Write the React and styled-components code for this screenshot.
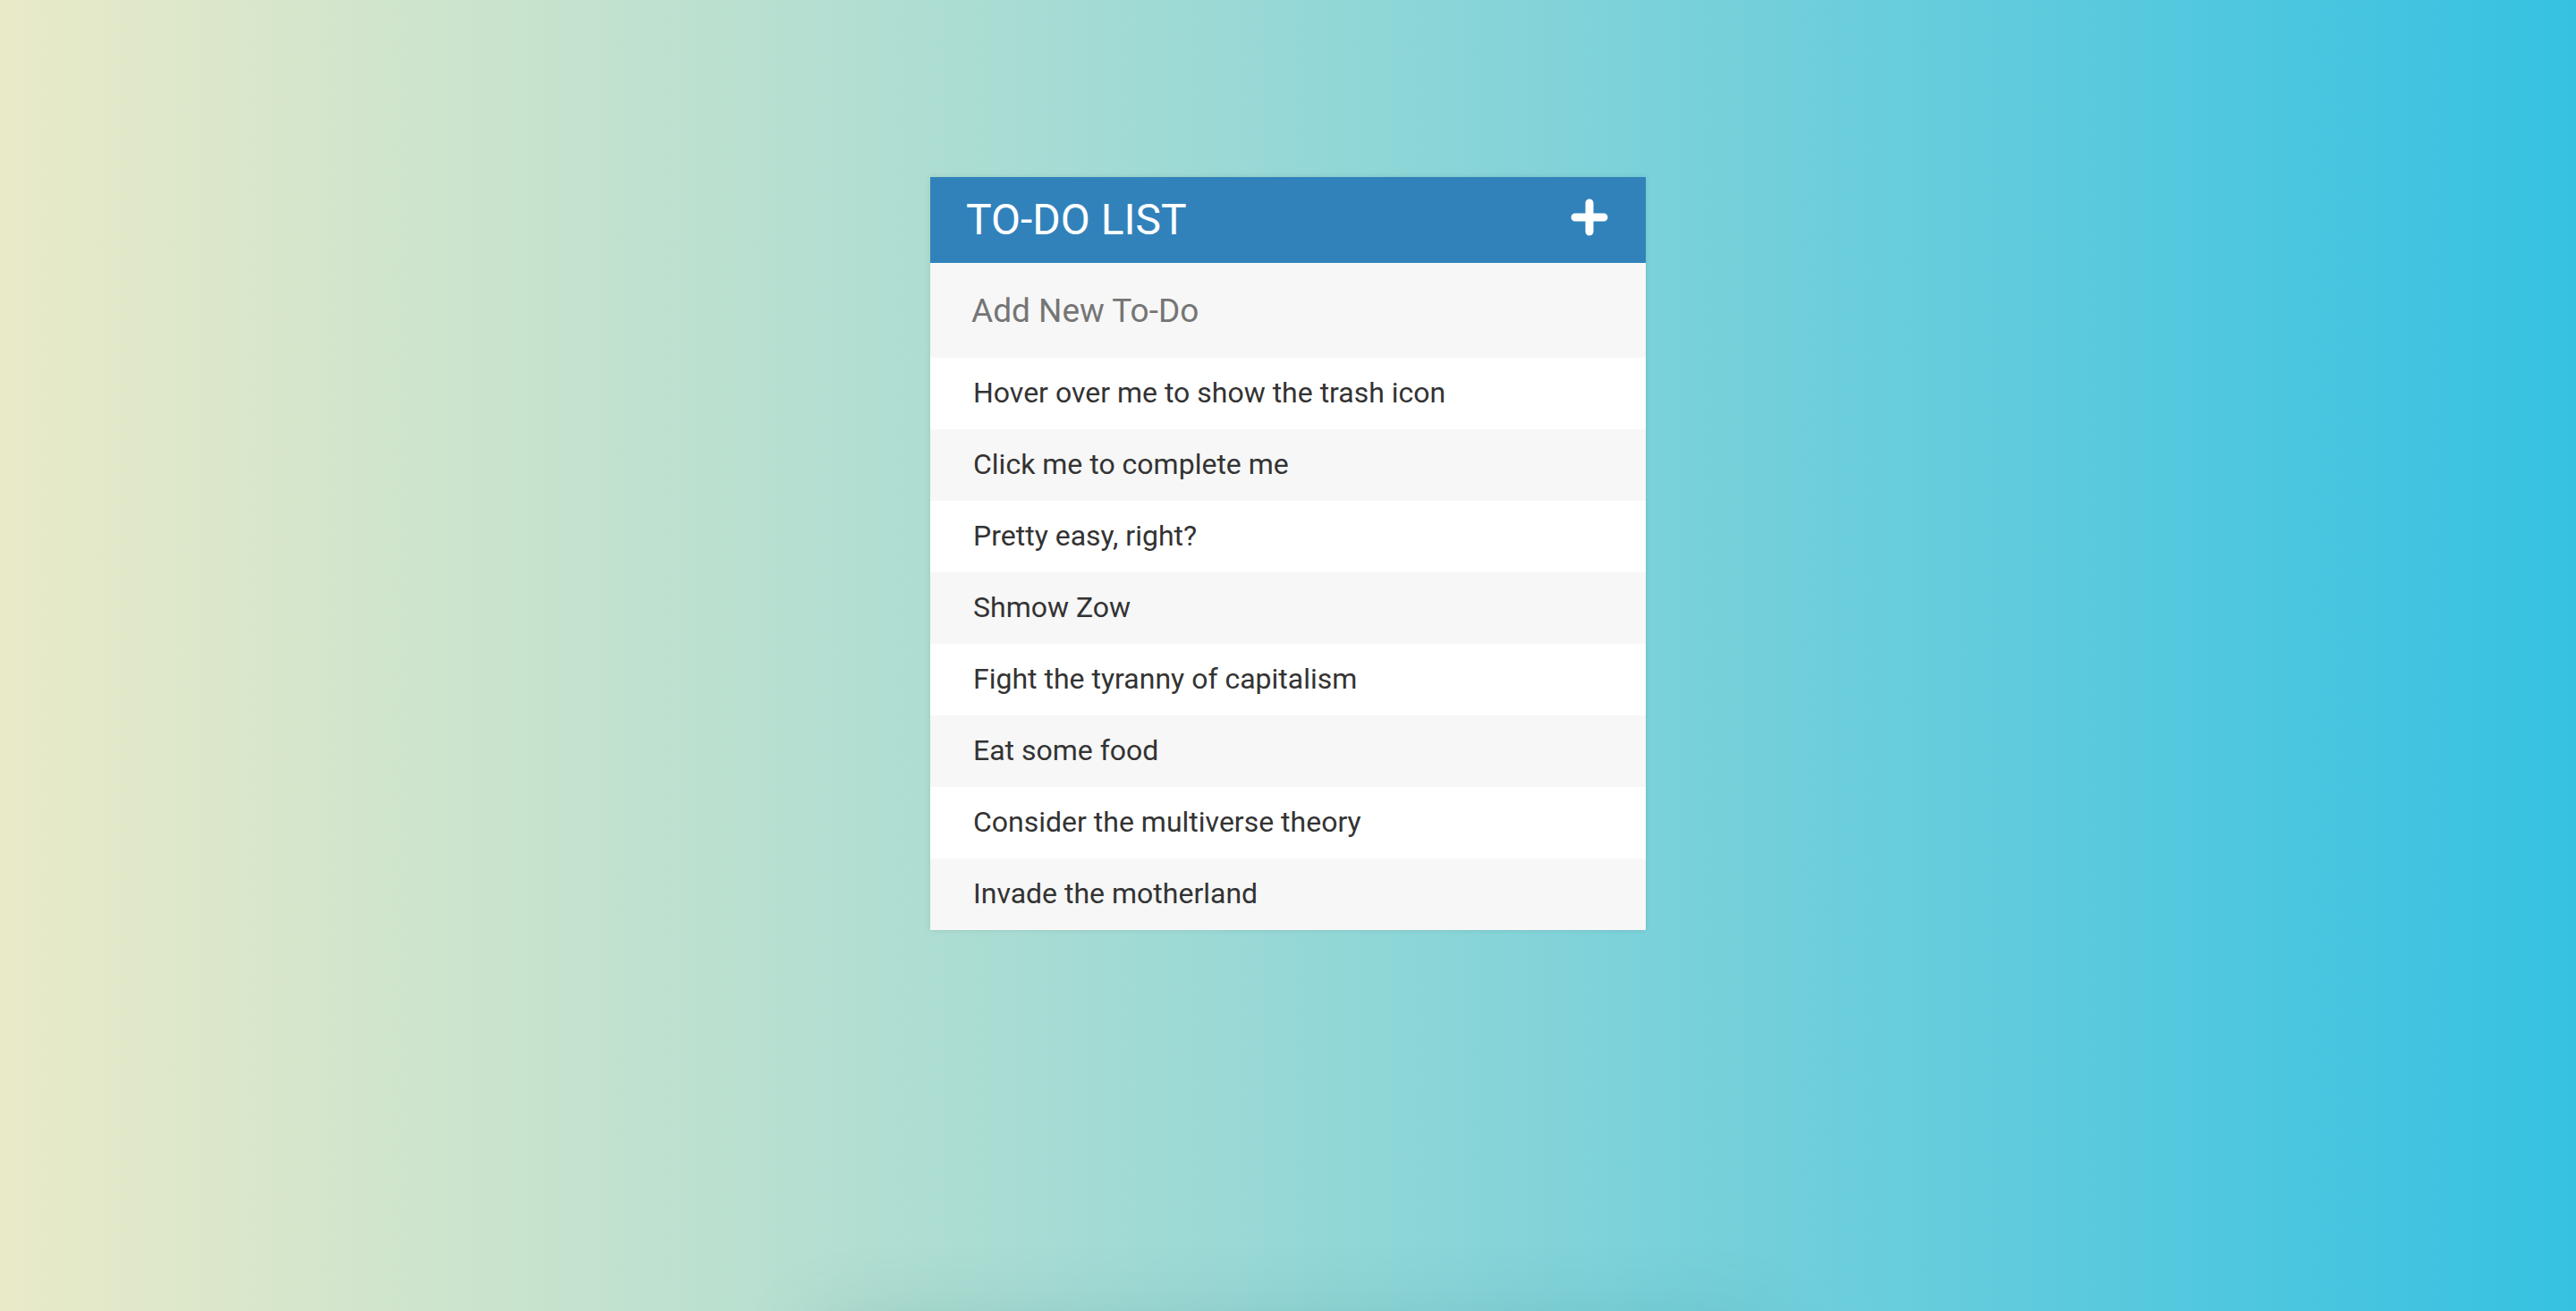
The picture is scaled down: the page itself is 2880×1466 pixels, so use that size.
import React from "react";
import styled, { createGlobalStyle } from "styled-components";

const GlobalStyle = createGlobalStyle`
  html, body { margin: 0; padding: 0; }
  body {
    font-family: Roboto, "Liberation Sans", Arial, sans-serif;
    background: linear-gradient(to right, #e9eac8 0%, #9fdad5 45%, #36c1e2 100%);
    min-height: 100vh;
    overflow: hidden;
  }
`;

const Page = styled.div`
  width: 100%;
  height: 1466px;
  display: flex;
  flex-direction: column;
  align-items: center;
  padding-top: 198px;
  box-sizing: border-box;
`;

const Card = styled.div`
  width: 800px;
  background: #f7f7f7;
  box-shadow: 0 0 6px rgba(0, 0, 0, 0.1);
`;

const Header = styled.h1`
  margin: 0;
  background: #3182bb;
  color: #fff;
  padding: 20px 40px;
  font-size: 48px;
  line-height: 56px;
  font-weight: 400;
  text-transform: uppercase;
  display: flex;
  align-items: center;
  justify-content: space-between;
`;

const PlusButton = styled.span`
  display: flex;
  align-items: center;
  justify-content: center;
  width: 42px;
  height: 42px;
  margin-right: 2px;
  margin-bottom: 6px;
`;

const Input = styled.input`
  display: block;
  width: 100%;
  box-sizing: border-box;
  font-family: inherit;
  font-size: 37px;
  line-height: 42px;
  height: 106px;
  padding: 26px 26px 26px 40px;
  background: #f7f7f7;
  border: 6px solid transparent;
  color: #2980b9;
  outline: none;
  &::placeholder { color: #757575; }
`;

const List = styled.ul`
  list-style: none;
  margin: 0;
  padding: 0;
`;

const Item = styled.li`
  background: ${(p) => (p.$alt ? "#f7f7f7" : "#ffffff")};
  height: 80px;
  line-height: 78px;
  color: #333;
  font-size: 32px;
  padding-left: 48px;
`;

const BottomShade = styled.div`
  margin-top: 470px;
  width: 1000px;
  height: 200px;
  flex-shrink: 0;
  box-shadow: 0 0 90px 20px rgba(40, 110, 120, 0.25);
`;

const todos = [
  "Hover over me to show the trash icon",
  "Click me to complete me",
  "Pretty easy, right?",
  "Shmow Zow",
  "Fight the tyranny of capitalism",
  "Eat some food",
  "Consider the multiverse theory",
  "Invade the motherland",
];

export default function App() {
  return (
    <>
      <GlobalStyle />
      <Page>
        <Card>
          <Header>
            <span>To-Do List</span>
            <PlusButton>
              <svg width="42" height="42" viewBox="0 0 42 42">
                <path
                  d="M21 5 V37 M5 21 H37"
                  stroke="#fff"
                  strokeWidth="9"
                  strokeLinecap="round"
                />
              </svg>
            </PlusButton>
          </Header>
          <Input placeholder="Add New To-Do" />
          <List>
            {todos.map((t, i) => (
              <Item key={t} $alt={i % 2 === 1}>
                {t}
              </Item>
            ))}
          </List>
        </Card>
        <BottomShade />
      </Page>
    </>
  );
}
